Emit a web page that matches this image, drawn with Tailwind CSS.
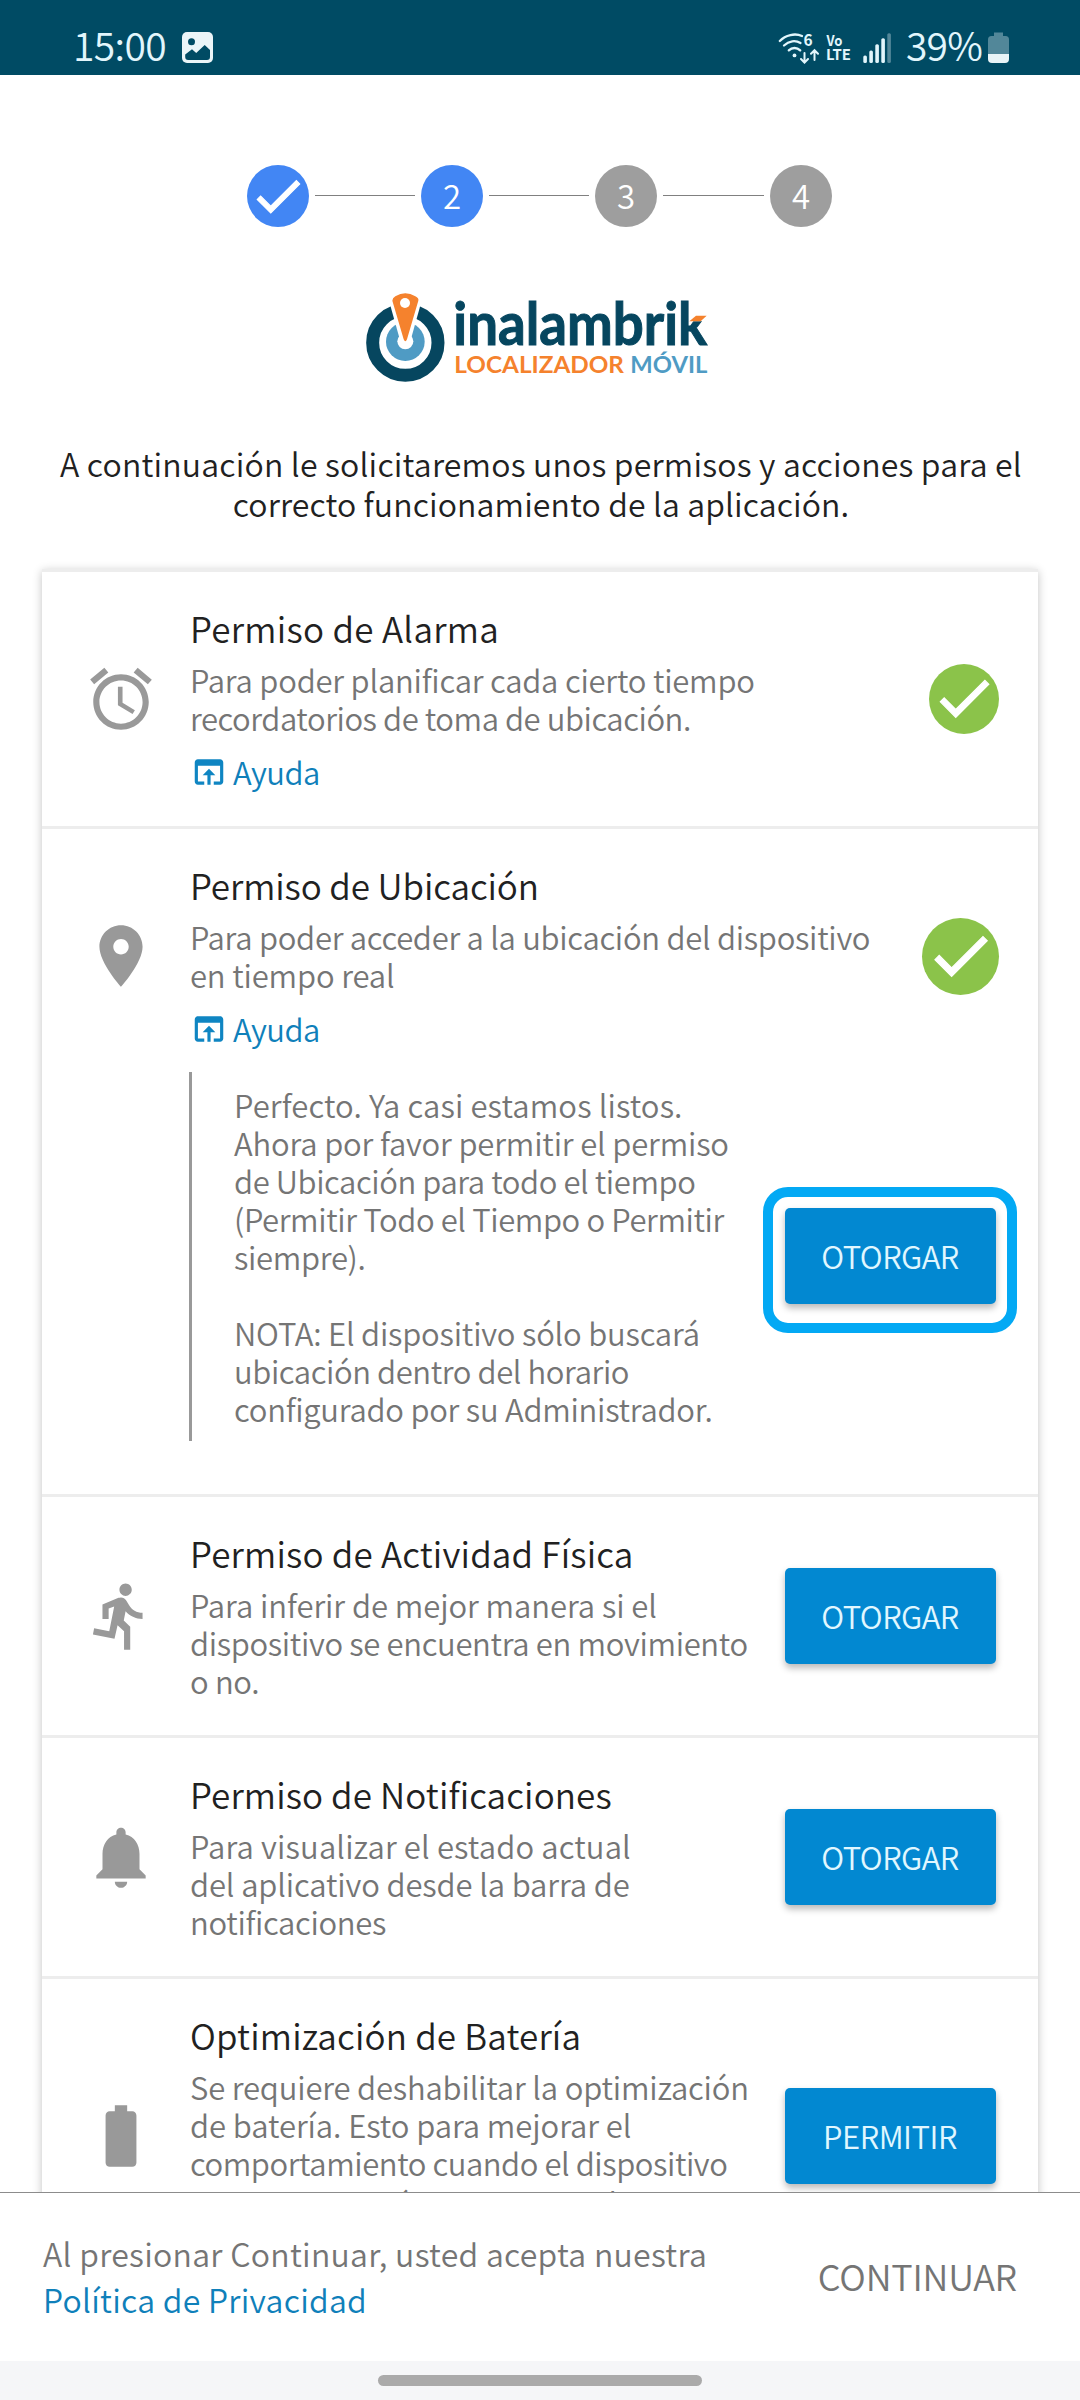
<!DOCTYPE html>
<html lang="es">
<head>
<meta charset="utf-8">
<title>Inalambrik Localizador Móvil</title>
<script src="https://cdn.jsdelivr.net/npm/@tailwindcss/browser@4"></script>
</head>
<body class="flex h-[2400px] w-[1080px] flex-col overflow-hidden bg-white font-['Noto_Sans_CJK_SC','Noto_Sans',sans-serif] font-[350] text-[#212121]">

<svg class="hidden">
  <symbol id="done" viewBox="0 0 24 24"><path stroke-width=".45" d="M9 16.2L4.8 12l-1.4 1.4L9 19 21 7l-1.4-1.4L9 16.2z"/></symbol>
  <symbol id="browser" viewBox="0 0 24 24"><path d="M19 4H5c-1.11 0-2 .9-2 2v12c0 1.1.89 2 2 2h4v-2H5V8h14v10h-4v2h4c1.1 0 2-.9 2-2V6c0-1.1-.89-2-2-2zm-7 6l-4 4h3v6h2v-6h3l-4-4z"/></symbol>
</svg>

<!-- Status bar -->
<header class="flex h-[75px] shrink-0 items-center bg-[#004b64] pr-[71px] pl-[73px] text-[#e2f6fc]">
  <div class="mt-[12px] h-[56px] w-[109px] text-[39px] leading-[56px] tracking-[-0.6px]">15:00</div>
  <svg class="mt-[20px] h-[31px] w-[31px]" viewBox="0 0 31 31"><rect width="31" height="31" rx="5" fill="#ebf5f8"/><circle cx="9.5" cy="9.7" r="3.5" fill="#004b64"/><path d="M3.2 22.500l6.800-5.200 4.200 3.700 8.500-8 5.300 5v7q0 3-3 3H6.200q-3 0-3-3z" fill="#004b64"/></svg>
  <div class="mt-[20px] ml-auto flex h-[32px] items-center">
    <svg class="h-[32px] w-[41px]" viewBox="0 0 41 32" fill="none" stroke="#e2f6fc" stroke-width="2.3" stroke-linecap="round">
      <path d="M1.8 9C7.500 3 17 .8 24 4M6 13.500C11 8.700 17.500 8 22.500 11M10.800 18.400C14 15.200 19 15.200 22.200 18.400"/>
      <circle cx="16.500" cy="23.400" r="1.900" fill="#e2f6fc" stroke="none"/>
      <path d="M26.500 21v9M23 27l3.500 3.600L30 27M36.500 28v-9.500M33 21.800l3.500-3.600 3.500 3.600" stroke-width="2"/>
      <text x="25.600" y="14" font-size="15.500" font-weight="700" stroke="none" fill="#e2f6fc">6</text>
    </svg>
    <svg class="ml-[7px] h-[32px] w-[27px] font-bold" viewBox="0 0 27 32" fill="#e2f6fc"><text x=".5" y="13.500" font-size="14.500" textLength="16" lengthAdjust="spacingAndGlyphs">Vo</text><text x="0" y="28" font-size="15" textLength="25" lengthAdjust="spacingAndGlyphs">LTE</text></svg>
    <svg class="ml-[10px] h-[32px] w-[29px]" viewBox="0 0 29 32" fill="#e2f6fc"><rect x=".3" y="23.500" width="3.600" height="7.500" rx="1.500"/><rect x="6.300" y="18.500" width="3.600" height="12.500" rx="1.500"/><rect x="12.300" y="12.300" width="3.600" height="18.700" rx="1.500"/><rect x="18.300" y="6.300" width="3.600" height="24.700" rx="1.500"/><rect x="24.300" y="1.300" width="3.600" height="29.700" rx="1.500" fill="#528799"/></svg>
    <span class="mt-[-8px] ml-[14px] w-[82px] text-[39px] leading-[56px] tracking-[-0.8px]">39%</span>
    <svg class="h-[32px] w-[21px]" viewBox="0 0 21 32"><path d="M6 .5h9V4h2.500Q21 4 21 7.500V22H0V7.500Q0 4 3.500 4H6z" fill="#528799"/><path d="M0 22h21v5q0 4-4 4H4q-4 0-4-4z" fill="#e9f4f7"/></svg>
  </div>
</header>

<main class="flex h-[2117px] shrink-0 flex-col overflow-hidden">
  <!-- Stepper -->
  <ol class="mt-[90px] ml-[247px] flex h-[62px] shrink-0 items-center gap-[6px] text-[33px] leading-[60px] text-white">
    <li class="flex size-[62px] items-center justify-center rounded-full bg-[#4286f4]"><svg class="mb-px size-[58px] fill-white stroke-white"><use href="#done"/></svg></li>
    <li class="mb-px h-px w-[100px] bg-[#808080]"></li>
    <li class="size-[62px] rounded-full bg-[#4286f4] text-center">2</li>
    <li class="mb-px h-px w-[100px] bg-[#808080]"></li>
    <li class="size-[62px] rounded-full bg-[#9e9e9e] text-center">3</li>
    <li class="mb-px h-px w-[101px] bg-[#808080]"></li>
    <li class="size-[62px] rounded-full bg-[#9e9e9e] text-center">4</li>
  </ol>

  <!-- Logo -->
  <svg class="mx-auto mt-[43px] h-[130px] w-[400px] shrink-0" viewBox="0 0 1200 390">
    <circle cx="196" cy="218" r="98" fill="none" stroke="#06465f" stroke-width="39"/>
    <circle cx="196" cy="215" r="58" fill="#4f9bc4"/>
    <path d="M138 60L181 214h30L254 60z" fill="#fff"/>
    <circle cx="196" cy="214" r="24" fill="#fff"/>
    <path d="M157 92Q157 84 166 79Q196 60 226 79Q237 84 235 92L201 208Q196 220 191 208z" fill="#f5822d"/>
    <circle cx="195" cy="99" r="15" fill="#fff"/>
    <text class="font-['Lato',sans-serif]" x="340" y="225" font-size="176" font-weight="700" fill="#06465f" stroke="#06465f" stroke-width="3" textLength="762" lengthAdjust="spacingAndGlyphs">inalambrik</text>
    <path d="M1052 124h60v30h-56z" fill="#fff"/>
    <path d="M1068 137h32l-18 17h-34z" fill="#f5822d"/>
    <text class="font-['Lato',sans-serif]" x="343" y="310" font-size="67" font-weight="700" fill="#f5822d" textLength="509" lengthAdjust="spacingAndGlyphs">LOCALIZADOR</text>
    <text class="font-['Lato',sans-serif]" x="871" y="310" font-size="67" font-weight="700" fill="#4f9bc4" textLength="231" lengthAdjust="spacingAndGlyphs">MÓVIL</text>
  </svg>

  <p class="mt-[43px] ml-[2px] shrink-0 text-center text-[32px] leading-[40px] tracking-[0.19px]">A continuación le solicitaremos unos permisos y acciones para el<br><span class="tracking-[0.12px]">correcto funcionamiento de la aplicación.</span></p>

  <!-- Permission list -->
  <ul class="mt-[46px] ml-[42px] w-[996px] shrink-0 bg-white shadow-[0_2px_9px_rgba(0,0,0,0.24)]">
    <li class="flex h-[257px] items-center border-t-3 border-[#ededed] pr-[39px] pl-[42px]">
      <svg class="size-[74px] shrink-0 fill-[#999]" viewBox="0 0 24 24"><path d="M22 5.72l-4.600-3.860-1.290 1.530 4.600 3.860L22 5.720zM7.880 3.390L6.600 1.860 2 5.710l1.290 1.530 4.590-3.850zM12.500 8H11v6l4.750 2.850.75-1.230-4-2.370V8zM12 4c-4.970 0-9 4.030-9 9s4.020 9 9 9c4.970 0 9-4.030 9-9s-4.030-9-9-9zm0 16c-3.870 0-7-3.130-7-7s3.130-7 7-7 7 3.130 7 7-3.130 7-7 7z"/></svg>
      <div class="ml-[32px] h-full pt-[34px] whitespace-nowrap">
        <h2 class="text-[35px] leading-[44px] tracking-[0.3px]">Permiso de Alarma</h2>
        <p class="mt-[11px] text-[31px] leading-[38px] tracking-[-0.2px] text-[#757575]">Para poder planificar cada cierto tiempo<br><span class="tracking-[-0.43px]">recordatorios de toma de ubicación.</span></p>
        <a class="mt-[16px] flex items-center gap-[5px] text-[31px] leading-[38px] tracking-[-0.5px] text-[#0f80ba]"><svg class="size-[38px] fill-[#0f85c2]"><use href="#browser"/></svg>Ayuda</a>
      </div>
      <div class="mb-px ml-auto flex size-[70px] items-center justify-center rounded-full bg-[#8bc34a]"><svg class="mb-[2px] size-[66px] fill-white stroke-white"><use href="#done"/></svg></div>
    </li>

    <li class="h-[668px] border-t-3 border-[#ededed]">
      <div class="flex h-[243px] items-center pr-[39px] pl-[42px]">
        <svg class="mt-[11px] size-[74px] shrink-0 fill-[#999]" viewBox="0 0 24 24"><path d="M12 2C8.130 2 5 5.130 5 9c0 5.250 7 13 7 13s7-7.750 7-13c0-3.870-3.130-7-7-7zm0 9.500c-1.380 0-2.500-1.120-2.500-2.500s1.120-2.500 2.500-2.500 2.500 1.120 2.500 2.500-1.120 2.500-2.500 2.500z"/></svg>
        <div class="ml-[32px] h-full pt-[34px] whitespace-nowrap">
          <h2 class="text-[35px] leading-[44px] tracking-[-0.1px]">Permiso de Ubicación</h2>
          <p class="mt-[11px] text-[31px] leading-[38px] tracking-[-0.28px] text-[#757575]">Para poder acceder a la ubicación del dispositivo<br><span class="tracking-[-0.15px]">en tiempo real</span></p>
          <a class="mt-[16px] flex items-center gap-[5px] text-[31px] leading-[38px] tracking-[-0.5px] text-[#0f80ba]"><svg class="size-[38px] fill-[#0f85c2]"><use href="#browser"/></svg>Ayuda</a>
        </div>
        <div class="mt-[11px] ml-auto flex size-[77px] items-center justify-center rounded-full bg-[#8bc34a]"><svg class="mb-[2px] size-[71px] fill-white stroke-white"><use href="#done"/></svg></div>
      </div>
      <div class="ml-[147px] flex h-[369px] items-center border-l-3 border-[#999] pr-[21px] pl-[42px]">
        <p class="text-[31px] leading-[38px] whitespace-nowrap text-[#757575]"><span class="tracking-[0.13px]">Perfecto. Ya casi estamos listos.</span><br><span class="tracking-[-0.16px]">Ahora por favor permitir el permiso</span><br><span class="tracking-[-0.41px]">de Ubicación para todo el tiempo</span><br><span class="tracking-[-0.38px]">(Permitir Todo el Tiempo o Permitir</span><br><span class="tracking-[-0.3px]">siempre).</span><br><br><span class="tracking-[-0.2px]">NOTA: El dispositivo sólo buscará</span><br><span class="tracking-[-0.4px]">ubicación dentro del horario</span><br><span class="tracking-[-0.25px]">configurado por su Administrador.</span></p>
        <div class="mt-[7px] ml-auto h-[146px] w-[254px] rounded-[25px] border-[10px] border-[#03a9f4] pt-[11px] pl-[12px]">
          <button class="h-[96px] w-[211px] rounded-[5px] bg-[#0288d1] pr-[1px] text-[31px] leading-[94px] tracking-[-0.5px] text-[#e0f7ff] shadow-[0_4px_7px_rgba(0,0,0,0.28)]">OTORGAR</button>
        </div>
      </div>
    </li>

    <li class="flex h-[241px] items-center border-t-3 border-[#ededed] pr-[42px] pl-[42px]">
      <svg class="size-[74px] shrink-0 fill-[#999]" viewBox="0 0 24 24"><path d="M13.490 5.480c1.100 0 2-.9 2-2s-.9-2-2-2-2 .9-2 2 .9 2 2 2zm-3.600 13.900l1-4.400 2.100 2v6h2v-7.500l-2.100-2 .6-3c1.300 1.500 3.300 2.500 5.500 2.500v-2c-1.900 0-3.500-1-4.300-2.400l-1-1.600c-.4-.6-1-1-1.700-1-.3 0-.5.1-.8.1l-5.200 2.200v4.700h2v-3.400l1.800-.7-1.600 8.100-4.900-1-.4 2 7 1.400z"/></svg>
      <div class="ml-[32px] h-full pt-[34px] whitespace-nowrap">
        <h2 class="text-[35px] leading-[44px] tracking-[0.2px]">Permiso de Actividad Física</h2>
        <p class="mt-[11px] text-[31px] leading-[38px] tracking-[-0.33px] text-[#757575]"><span class="tracking-[-0.06px]">Para inferir de mejor manera si el</span><br>dispositivo se encuentra en movimiento<br>o no.</p>
      </div>
      <button class="ml-auto h-[96px] w-[211px] rounded-[5px] bg-[#0288d1] pr-[1px] text-[31px] leading-[94px] tracking-[-0.5px] text-[#e0f7ff] shadow-[0_4px_7px_rgba(0,0,0,0.28)]">OTORGAR</button>
    </li>

    <li class="flex h-[241px] items-center border-t-3 border-[#ededed] pr-[42px] pl-[42px]">
      <svg class="size-[74px] shrink-0 fill-[#999]" viewBox="0 0 24 24"><path d="M12 22c1.100 0 2-.9 2-2h-4c0 1.100.9 2 2 2zm6-6v-5c0-3.070-1.640-5.640-4.500-6.320V4c0-.83-.67-1.500-1.500-1.500s-1.500.67-1.500 1.500v.68C7.630 5.360 6 7.920 6 11v5l-2 2v1h16v-1l-2-2z"/></svg>
      <div class="ml-[32px] h-full pt-[34px] whitespace-nowrap">
        <h2 class="text-[35px] leading-[44px] tracking-[0.12px]">Permiso de Notificaciones</h2>
        <p class="mt-[11px] text-[31px] leading-[38px] tracking-[-0.3px] text-[#757575]"><span class="tracking-[0.15px]">Para visualizar el estado actual</span><br><span class="tracking-[-0.12px]">del aplicativo desde la barra de</span><br>notificaciones</p>
      </div>
      <button class="ml-auto h-[96px] w-[211px] rounded-[5px] bg-[#0288d1] pr-[1px] text-[31px] leading-[94px] tracking-[-0.5px] text-[#e0f7ff] shadow-[0_4px_7px_rgba(0,0,0,0.28)]">OTORGAR</button>
    </li>

    <li class="flex h-[317px] items-center border-t-3 border-[#ededed] pr-[42px] pl-[42px]">
      <svg class="size-[74px] shrink-0 fill-[#999]" viewBox="0 0 24 24"><path d="M15.670 4H14V2h-4v2H8.330C7.600 4 7 4.600 7 5.330v15.330C7 21.400 7.600 22 8.330 22h7.330c.74 0 1.340-.6 1.340-1.330V5.330C17 4.600 16.400 4 15.670 4z"/></svg>
      <div class="ml-[32px] h-full pt-[34px] whitespace-nowrap">
        <h2 class="text-[35px] leading-[44px] tracking-[0.18px]">Optimización de Batería</h2>
        <p class="mt-[11px] text-[31px] leading-[38px] tracking-[-0.17px] text-[#757575]">Se requiere deshabilitar la optimización<br><span class="tracking-[-0.07px]">de batería. Esto para mejorar el</span><br><span class="tracking-[-0.43px]">comportamiento cuando el dispositivo</span></p>
        <p class="mt-[2px] text-[31px] leading-[38px] tracking-[-0.4px] text-[#757575]">se mueve o está en uso normal</p>
      </div>
      <button class="ml-auto h-[96px] w-[211px] rounded-[5px] bg-[#0288d1] pr-[1px] text-[31px] leading-[94px] tracking-[-0.45px] text-[#e0f7ff] shadow-[0_4px_7px_rgba(0,0,0,0.28)]">PERMITIR</button>
    </li>
  </ul>
</main>

<!-- Footer -->
<footer class="flex h-[169px] shrink-0 items-center justify-between border-t border-[#8c8c8c] pr-[63px] pb-[2px] pl-[43px] text-[#757575]">
  <p class="text-[32px] leading-[46px] tracking-[0.28px] whitespace-nowrap">Al presionar Continuar, usted acepta nuestra<br><a class="text-[#0f80ba]">Política de Privacidad</a></p>
  <button class="pb-[2px] text-[36px] leading-[46px] tracking-[-0.2px]">CONTINUAR</button>
</footer>

<!-- Gesture bar -->
<div class="flex h-[39px] shrink-0 justify-center bg-[#f5f6f8] pt-[14px]"><div class="h-[11px] w-[324px] rounded-full bg-[#aaa]"></div></div>
</body>
</html>
